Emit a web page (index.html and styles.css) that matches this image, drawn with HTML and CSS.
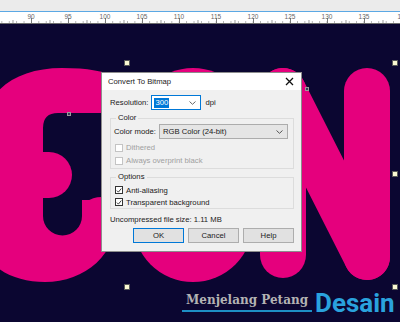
FILE: index.html
```html
<!DOCTYPE html>
<html lang="en">
<head>
    <meta charset="UTF-8">
    <meta name="viewport" content="width=device-width, initial-scale=1.0">
    <title>Convert To Bitmap</title>
    <link rel="stylesheet" href="styles.css">
</head>
<body>
    <div class="app">
        <div class="topbar"></div>

        <!-- horizontal ruler -->
        <div class="ruler">
            <div class="ruler-labels">
                <span>90</span><span>95</span><span>100</span><span>105</span><span>110</span>
                <span>115</span><span>120</span><span>125</span><span>130</span><span>135</span><span>14</span>
            </div>
        </div>

        <div class="canvas">
            <!-- the artwork, drawn in page coordinates -->
            <svg class="art" width="400" height="298" viewBox="0 24 400 298">
                <g fill="#e5007d">
                    <path d="M -20 140 C -20 95 12 68 62 68 C 88 68 104 71 120 78 L 140 90 L 140 210 L 118 210 C 118 255 85 282 45 282 C 10 282 -20 265 -20 230 Z"/>
                    <rect x="133" y="68" width="120" height="214" rx="60"/>
                </g>
                <g fill="#0b0631">
                    <path d="M 140 113 L 58 113 Q 43 113 43 128 L 43 216 A 19.5 19.5 0 0 0 82 216 L 82 200 L 140 200 Z"/>
                </g>
                <g fill="#e5007d">
                    <rect x="-20" y="152" width="92" height="46" rx="23"/>
                    <path d="M 82 217 Q 82 197 102 197 L 140 197 L 140 240 L 82 240 Z"/>
                </g>
                <g stroke="#e5007d" stroke-width="46" stroke-linecap="round" fill="none">
                    <line x1="283" y1="91" x2="283" y2="255"/>
                    <line x1="367" y1="91" x2="367" y2="257"/>
                    <line x1="283" y1="91" x2="367" y2="257"/>
                </g>
            </svg>

            <!-- selection handles -->
            <span class="handle h-tl"></span>
            <span class="handle h-tr"></span>
            <span class="handle h-mr"></span>
            <span class="handle h-br"></span>
            <span class="handle h-bl"></span>
            <span class="node n-1"></span>
            <span class="node n-2"></span>

            <!-- dialog -->
            <div class="dialog">
                <div class="dialog-title">
                    <span>Convert To Bitmap</span>
                    <svg class="close" width="9" height="9" viewBox="0 0 9 9">
                        <path d="M1 1 L8 8 M8 1 L1 8" stroke="#111" stroke-width="1.3"/>
                    </svg>
                </div>
                <div class="dialog-body">
                    <div class="row">
                        <span class="label">Resolution:</span>
                        <div class="select res-select">
                            <span class="picked">300</span>
                            <svg width="7" height="4" viewBox="0 0 7 4"><path d="M0.5 0.5 L3.5 3.3 L6.5 0.5" stroke="#666" fill="none"/></svg>
                        </div>
                        <span class="unit">dpi</span>
                    </div>

                    <fieldset class="group group-color">
                        <legend>Color</legend>
                        <div class="row">
                            <span class="label">Color mode:</span>
                            <div class="select combo">
                                <span>RGB Color (24-bit)</span>
                                <svg width="7" height="4" viewBox="0 0 7 4"><path d="M0.5 0.5 L3.5 3.3 L6.5 0.5" stroke="#555" fill="none"/></svg>
                            </div>
                        </div>
                        <div class="check disabled"><span class="box"></span>Dithered</div>
                        <div class="check disabled"><span class="box"></span>Always overprint black</div>
                    </fieldset>

                    <fieldset class="group group-options">
                        <legend>Options</legend>
                        <div class="check"><span class="box"><svg width="7" height="7" viewBox="0 0 7 7"><path d="M1 3.6 L2.8 5.4 L6.2 1.2" stroke="#222" fill="none"/></svg></span>Anti-aliasing</div>
                        <div class="check"><span class="box"><svg width="7" height="7" viewBox="0 0 7 7"><path d="M1 3.6 L2.8 5.4 L6.2 1.2" stroke="#222" fill="none"/></svg></span>Transparent background</div>
                    </fieldset>

                    <div class="filesize">Uncompressed file size: 1.11 MB</div>

                    <div class="buttons">
                        <button class="btn btn-default">OK</button>
                        <button class="btn">Cancel</button>
                        <button class="btn">Help</button>
                    </div>
                </div>
            </div>

            <!-- watermark -->
            <div class="watermark">
                <span class="wm-small">Menjelang Petang</span>
                <span class="wm-big">Desain</span>
            </div>
        </div>
    </div>
</body>
</html>
```

FILE: styles.css
```css
body {
    margin: 0;
    font-family: "Liberation Sans", Arial, sans-serif;
    background-color: #0b0631;
}

.app {
    width: 400px;
    height: 322px;
    display: flex;
    flex-direction: column;
    overflow: hidden;
}

.topbar {
    height: 11px;
    background-color: #ebebeb;
    border-bottom: 1px solid #5ba8e4;
}

.ruler {
    height: 11px;
    background-color: #ffffff;
    border-bottom: 1px solid #6d6d6d;
    background-image:
        linear-gradient(to right, #7a7a7a 1px, transparent 1px),
        linear-gradient(to right, #999999 1px, transparent 1px),
        linear-gradient(to right, #b0b0b0 1px, transparent 1px);
    background-size: 37px 5px, 18.5px 3px, 7.4px 2px;
    background-position: 31px 100%, 12.5px 100%, 1.4px 100%;
    background-repeat: repeat-x;
}

.ruler-labels {
    display: flex;
    padding-left: 12.5px;
    font-size: 6.5px;
    color: #666666;
    line-height: 8px;
    padding-top: 1px;
}

.ruler-labels span {
    flex: 0 0 37px;
    text-align: center;
}

.canvas {
    flex: 1;
    position: relative;
    background-color: #0b0631;
}

.art {
    display: block;
}

.handle {
    position: absolute;
    width: 4px;
    height: 4px;
    background-color: #fbf8d2;
    border: 1px solid #595959;
}

.h-tl { left: 124px; top: 36px; }
.h-tr { left: 392px; top: 36px; }
.h-mr { left: 392px; top: 147px; }
.h-br { left: 392px; top: 260px; }
.h-bl { left: 124px; top: 260px; }

.node {
    position: absolute;
    width: 2px;
    height: 2px;
    background-color: #3a3a5a;
    border: 1px solid #9a9a9a;
}

.n-1 { left: 67px; top: 88px; }
.n-2 { left: 305px; top: 63px; }

/* dialog */

.dialog {
    position: absolute;
    left: 101px;
    top: 48px;
    width: 201px;
    height: 180px;
    box-sizing: border-box;
    background-color: #f0f0f0;
    border: 1px solid #8d8d8d;
    font-size: 7.7px;
    color: #1a1a1a;
}

.dialog-title {
    height: 17px;
    background-color: #ffffff;
    display: flex;
    align-items: center;
    justify-content: space-between;
    padding: 0 7px 0 6px;
}

.dialog-body {
    padding: 5px 7px 0 8px;
}

.row {
    display: flex;
    align-items: center;
    height: 15px;
}

.label {
    margin-right: 3px;
}

.select {
    box-sizing: border-box;
    height: 15px;
    display: flex;
    align-items: center;
    justify-content: space-between;
    padding: 0 4px 0 2px;
}

.res-select {
    width: 50px;
    background-color: #ffffff;
    border: 1px solid #0078d7;
}

.picked {
    background-color: #0078d7;
    color: #ffffff;
    padding: 0 1px;
    line-height: 10px;
}

.unit {
    margin-left: 4px;
}

.group {
    margin: 3px 0 0 0;
    padding: 0 5px 1px 3px;
    border: 1px solid #dcdcdc;
    min-width: 0;
}

.group legend {
    padding: 0 2px;
    margin-left: 2px;
    line-height: 10px;
}

.combo {
    width: 129px;
    background-color: #e5e5e5;
    border: 1px solid #acacac;
    padding-left: 3px;
}

.group-color .row {
    margin-top: 1px;
    margin-bottom: 2px;
}

.check {
    display: flex;
    align-items: center;
    height: 13px;
    padding-left: 1px;
}

.box {
    box-sizing: border-box;
    width: 8px;
    height: 8px;
    margin-right: 3px;
    background-color: #ffffff;
    border: 1px solid #333333;
    display: flex;
    align-items: center;
    justify-content: center;
}

.disabled {
    color: #a0a0a0;
}

.disabled .box {
    border-color: #c4c4c4;
}

.group-options {
    margin-top: 3px;
    padding-bottom: 0;
}

.group-options .check {
    height: 12px;
}

.group-options .check:first-of-type {
    margin-top: 2px;
}

.filesize {
    margin-top: 5px;
    height: 12px;
    line-height: 12px;
}

.buttons {
    display: flex;
    justify-content: flex-end;
    gap: 4px;
    margin-top: 2px;
}

.btn {
    box-sizing: border-box;
    width: 51px;
    height: 15px;
    padding: 0;
    font-family: inherit;
    font-size: 7.7px;
    color: #1a1a1a;
    background-color: #e1e1e1;
    border: 1px solid #adadad;
}

.btn-default {
    border: 1px solid #0078d7;
}

/* watermark */

.watermark {
    position: absolute;
    left: 182px;
    top: 266px;
    display: flex;
    align-items: flex-end;
}

.wm-small {
    font-family: "DejaVu Serif", serif;
    font-weight: bold;
    font-size: 12px;
    color: #b3b3b3;
    padding: 0 4px 3px 4px;
    border-bottom: 2px solid #1d8ec4;
    line-height: 14px;
}

.wm-big {
    font-family: Roboto, "Liberation Sans", sans-serif;
    font-weight: bold;
    font-size: 26px;
    line-height: 26px;
    color: #2aa2dd;
    margin-left: 3px;
    margin-bottom: -4px;
}
```
